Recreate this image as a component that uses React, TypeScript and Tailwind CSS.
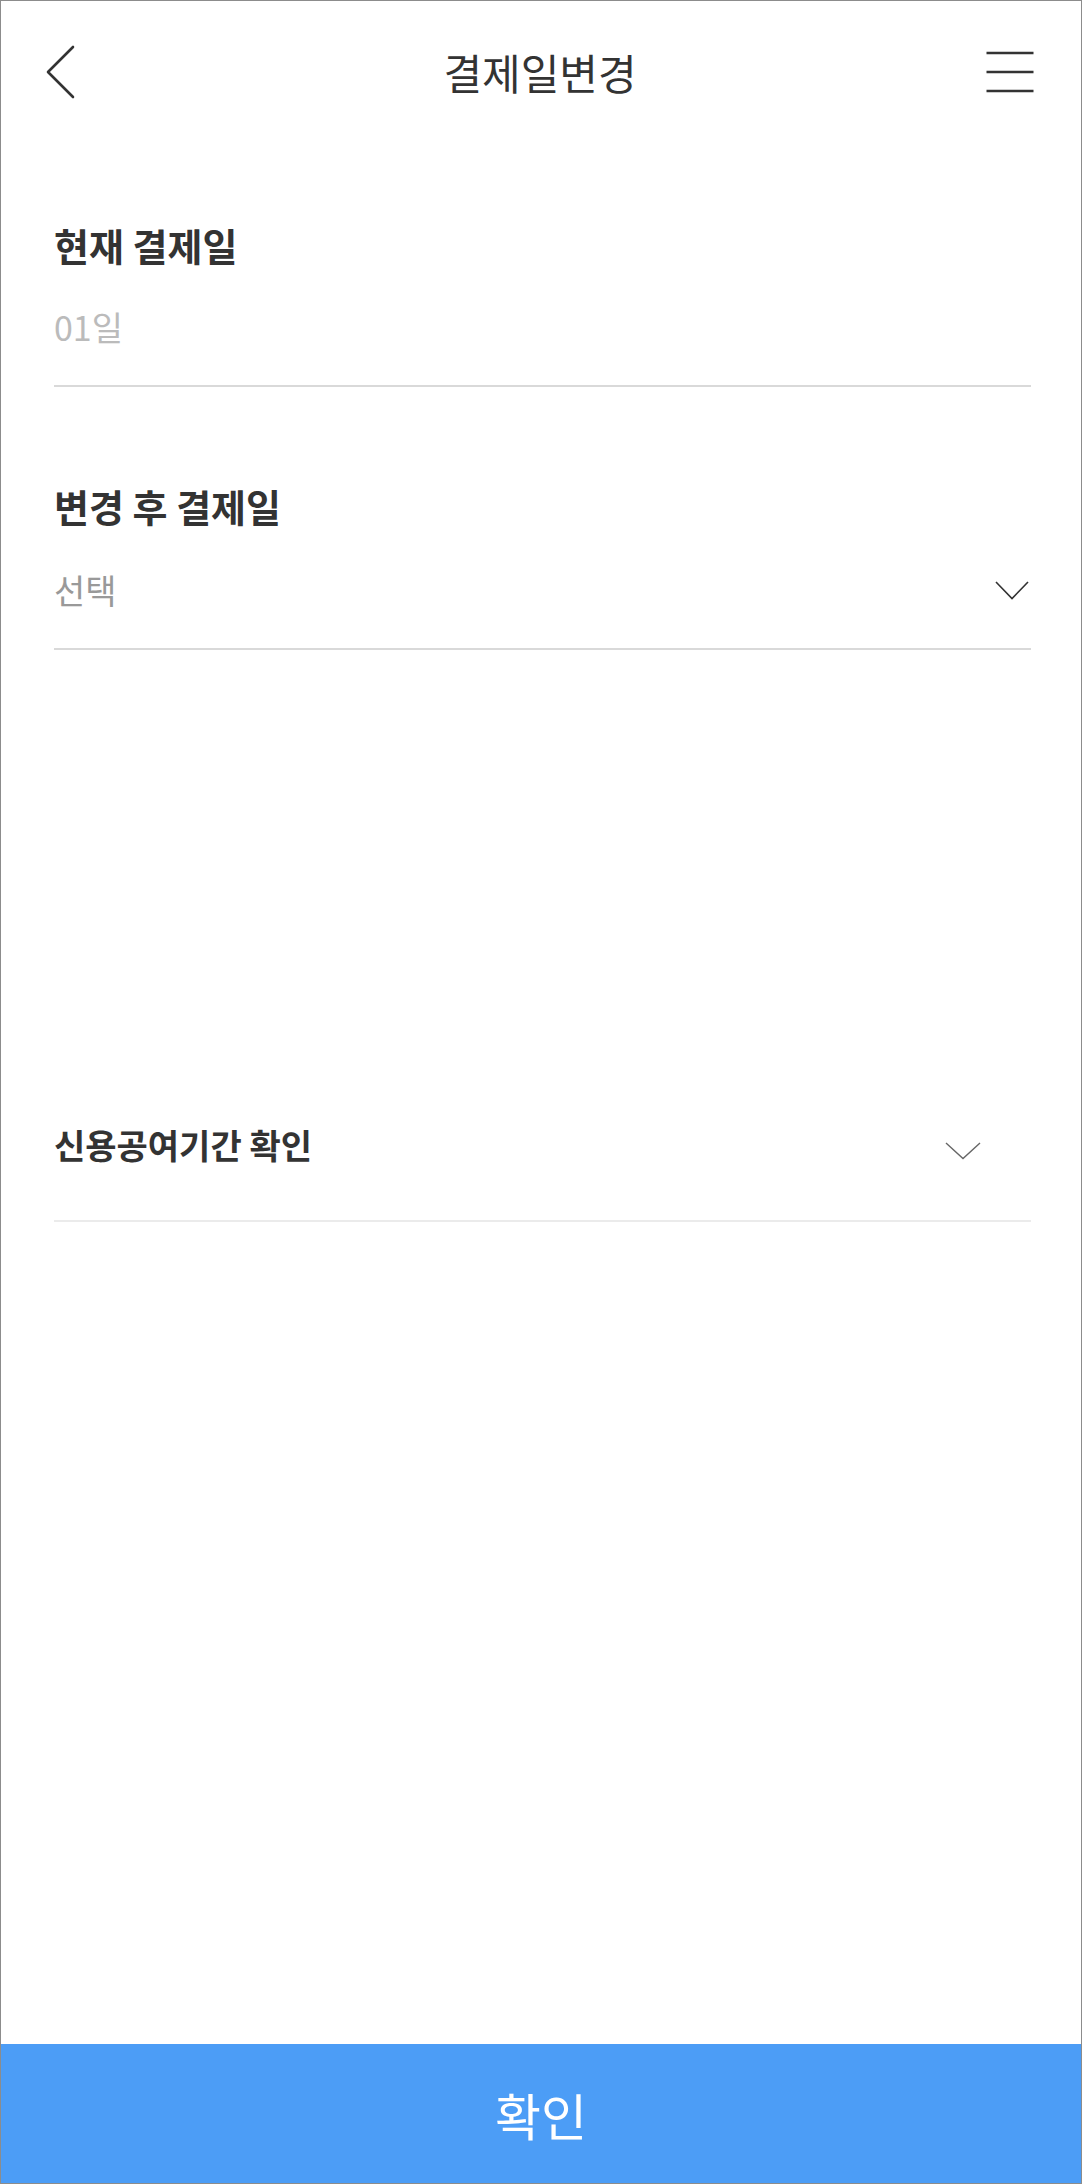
import React from "react";

const font = { fontFamily: '"Noto Sans CJK KR", "Noto Sans", sans-serif' };

function BackIcon() {
  return (
    <svg width="30" height="56" viewBox="0 0 30 56" fill="none">
      <polyline points="27,3 2,28 27,53" stroke="#333333" strokeWidth="2.6" strokeLinecap="round" strokeLinejoin="round" />
    </svg>
  );
}

function MenuIcon() {
  return (
    <svg width="48" height="44" viewBox="0 0 48 44" fill="none">
      <line x1="0.5" y1="3" x2="47.5" y2="3" stroke="#333333" strokeWidth="2.6" />
      <line x1="0.5" y1="22" x2="47.5" y2="22" stroke="#333333" strokeWidth="2.6" />
      <line x1="0.5" y1="41" x2="47.5" y2="41" stroke="#333333" strokeWidth="2.6" />
    </svg>
  );
}

function Chevron({ w, h, color, sw }: { w: number; h: number; color: string; sw: number }) {
  return (
    <svg width={w} height={h} viewBox={`0 0 ${w} ${h}`} fill="none">
      <polyline points={`1,1 ${w / 2},${h - 1.5} ${w - 1},1`} stroke={color} strokeWidth={sw} strokeLinejoin="miter" />
    </svg>
  );
}

export default function App() {
  return (
    <div style={font} className="w-[1082px] h-[2184px] border border-[#8c8c8c] bg-white flex flex-col box-border overflow-hidden">
      {/* Header */}
      <div className="h-[142px] grid grid-cols-[1fr_auto_1fr] items-center pl-[45px] pr-[47px]">
        <div className="justify-self-start flex items-center">
          <BackIcon />
        </div>
        <div className="text-[42px] leading-none text-[#333333] font-normal">결제일변경</div>
        <div className="justify-self-end flex items-center">
          <MenuIcon />
        </div>
      </div>

      {/* Content */}
      <div className="pl-[53px] pr-[50px] flex flex-col">
        {/* Current date */}
        <div className="mt-[83px] text-[38px] leading-none font-bold text-[#333333]">현재 결제일</div>
        <div className="mt-[46px] text-[34px] leading-none text-[#bbbbbb]">01일</div>
        <div className="mt-[41px] h-[2px] bg-[#d9d9d9]" />

        {/* New date */}
        <div className="mt-[100px] text-[38px] leading-none font-bold text-[#333333]">변경 후 결제일</div>
        <div className="mt-[48px] flex items-center justify-between">
          <div className="text-[34px] leading-none text-[#999999]">선택</div>
          <div className="mr-[2px] flex items-center">
            <Chevron w={34} h={19} color="#333333" sw={1.6} />
          </div>
        </div>
        <div className="mt-[41px] h-[2px] bg-[#d9d9d9]" />

        {/* Accordion */}
        <div className="mt-[478px] flex items-center justify-between">
          <div className="text-[34px] leading-none font-bold text-[#333333]">신용공여기간 확인</div>
          <div className="mr-[50px] flex items-center pt-[12px]">
            <Chevron w={36} h={18} color="#666666" sw={1.4} />
          </div>
        </div>
        <div className="mt-[58px] h-[2px] bg-[#ebebeb]" />
      </div>

      {/* Confirm button */}
      <button className="mt-auto h-[139px] w-full bg-[#4c9df6] text-white text-[50px] leading-none flex items-center justify-center">
        확인
      </button>
    </div>
  );
}
